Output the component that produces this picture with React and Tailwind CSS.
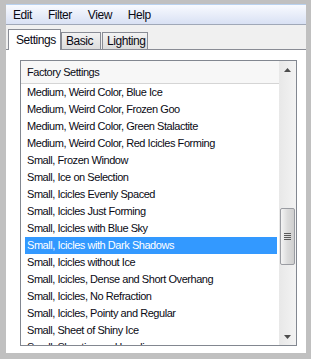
import React from "react";

const items = [
  "Medium, Weird Color, Blue Ice",
  "Medium, Weird Color, Frozen Goo",
  "Medium, Weird Color, Green Stalactite",
  "Medium, Weird Color, Red Icicles Forming",
  "Small, Frozen Window",
  "Small, Ice on Selection",
  "Small, Icicles Evenly Spaced",
  "Small, Icicles Just Forming",
  "Small, Icicles with Blue Sky",
  "Small, Icicles with Dark Shadows",
  "Small, Icicles without Ice",
  "Small, Icicles, Dense and Short Overhang",
  "Small, Icicles, No Refraction",
  "Small, Icicles, Pointy and Regular",
  "Small, Sheet of Shiny Ice",
  "Small, Shooting and Landing",
];

const SELECTED = 9;

function Tab({ label, active, width }) {
  if (active) {
    return (
      <div
        className="relative z-10 -mb-px flex h-[21px] shrink-0 items-center self-end border border-b-0 border-[#898c95] bg-white pb-[1px] pl-[7px]"
        style={{ width }}
      >
        {label}
      </div>
    );
  }
  return (
    <div
      className="flex h-[17px] shrink-0 items-center self-end border border-b-0 border-[#898c95] bg-gradient-to-b from-[#f3f3f3] to-[#dcdcdc] pl-[4px]"
      style={{ width }}
    >
      {label}
    </div>
  );
}

function Scrollbar() {
  return (
    <div className="flex w-[17px] shrink-0 flex-col bg-gradient-to-r from-[#e8e8e8] to-[#f3f3f3]">
      <div className="flex h-[17px] shrink-0 items-center justify-center">
        <svg width="7" height="4" viewBox="0 0 7 4">
          <path d="M0 4 L3.5 0 L7 4 Z" fill="#4d4d4d" />
        </svg>
      </div>
      <div className="h-[130px] shrink-0" />
      <div className="mx-[1px] flex h-[57px] shrink-0 items-center justify-center rounded-[2px] border border-[#9a9ca2] bg-gradient-to-r from-[#f4f4f4] via-[#dcdcdc] to-[#cfcfcf]">
        <div className="flex flex-col gap-[1px]">
          <div className="h-[1px] w-[7px] bg-[#5a5a5a]" />
          <div className="h-[1px] w-[7px] bg-[#5a5a5a]" />
          <div className="h-[1px] w-[7px] bg-[#5a5a5a]" />
          <div className="h-[1px] w-[7px] bg-[#5a5a5a]" />
        </div>
      </div>
      <div className="flex-1" />
      <div className="flex h-[17px] shrink-0 items-center justify-center">
        <svg width="7" height="4" viewBox="0 0 7 4">
          <path d="M0 0 L7 0 L3.5 4 Z" fill="#4d4d4d" />
        </svg>
      </div>
    </div>
  );
}

export default function App() {
  return (
    <div
      className="h-[359px] w-[311px] bg-[#c0c0c0] pl-[6px] pt-[4px] text-[11px] tracking-[-0.45px] text-[#0a0a14]"
      style={{ fontFamily: "'Liberation Sans', Arial, sans-serif" }}
    >
      <div className="flex h-[349px] w-[300px] flex-col overflow-hidden bg-[#f0f0f0]">
        {/* menu bar */}
        <div className="flex h-[21px] shrink-0 items-center gap-[16px] border-t border-b border-t-[#b9d1ee] border-b-[#a0a8b8] bg-gradient-to-b from-[#f8fafe] to-[#d9e1f4] pl-[7px] text-[12px]">
          <span>Edit</span>
          <span>Filter</span>
          <span>View</span>
          <span>Help</span>
        </div>

        {/* tabs */}
        <div className="flex h-[24px] shrink-0 items-end pl-[2px] text-[12px]">
          <Tab label="Settings" active width={53} />
          <Tab label="Basic" width={40} />
          <div className="w-[1px]" />
          <Tab label="Lighting" width={46} />
        </div>

        {/* panel */}
        <div className="flex min-h-0 flex-1 flex-col border-t border-[#898c95] bg-white pb-[7px] pl-[14px] pr-[9px] pt-[10px]">
          <div className="flex min-h-0 flex-1 overflow-hidden border border-[#828790]">
            <div className="flex min-w-0 flex-1 flex-col overflow-hidden">
              <div className="flex h-[23px] shrink-0 items-center border-b border-[#d5d5d5] bg-[#f7f7f7] pl-[6px]">
                Factory Settings
              </div>
              {items.map((t, i) => (
                <div
                  key={t}
                  className={
                    i === SELECTED
                      ? "ml-[4px] mr-[2px] flex h-[17px] shrink-0 items-center whitespace-nowrap bg-[#3399ff] pl-[2px] text-white"
                      : "ml-[4px] mr-[2px] flex h-[17px] shrink-0 items-center whitespace-nowrap pl-[2px]"
                  }
                >
                  {t}
                </div>
              ))}
            </div>
            <Scrollbar />
          </div>
        </div>
      </div>
    </div>
  );
}
